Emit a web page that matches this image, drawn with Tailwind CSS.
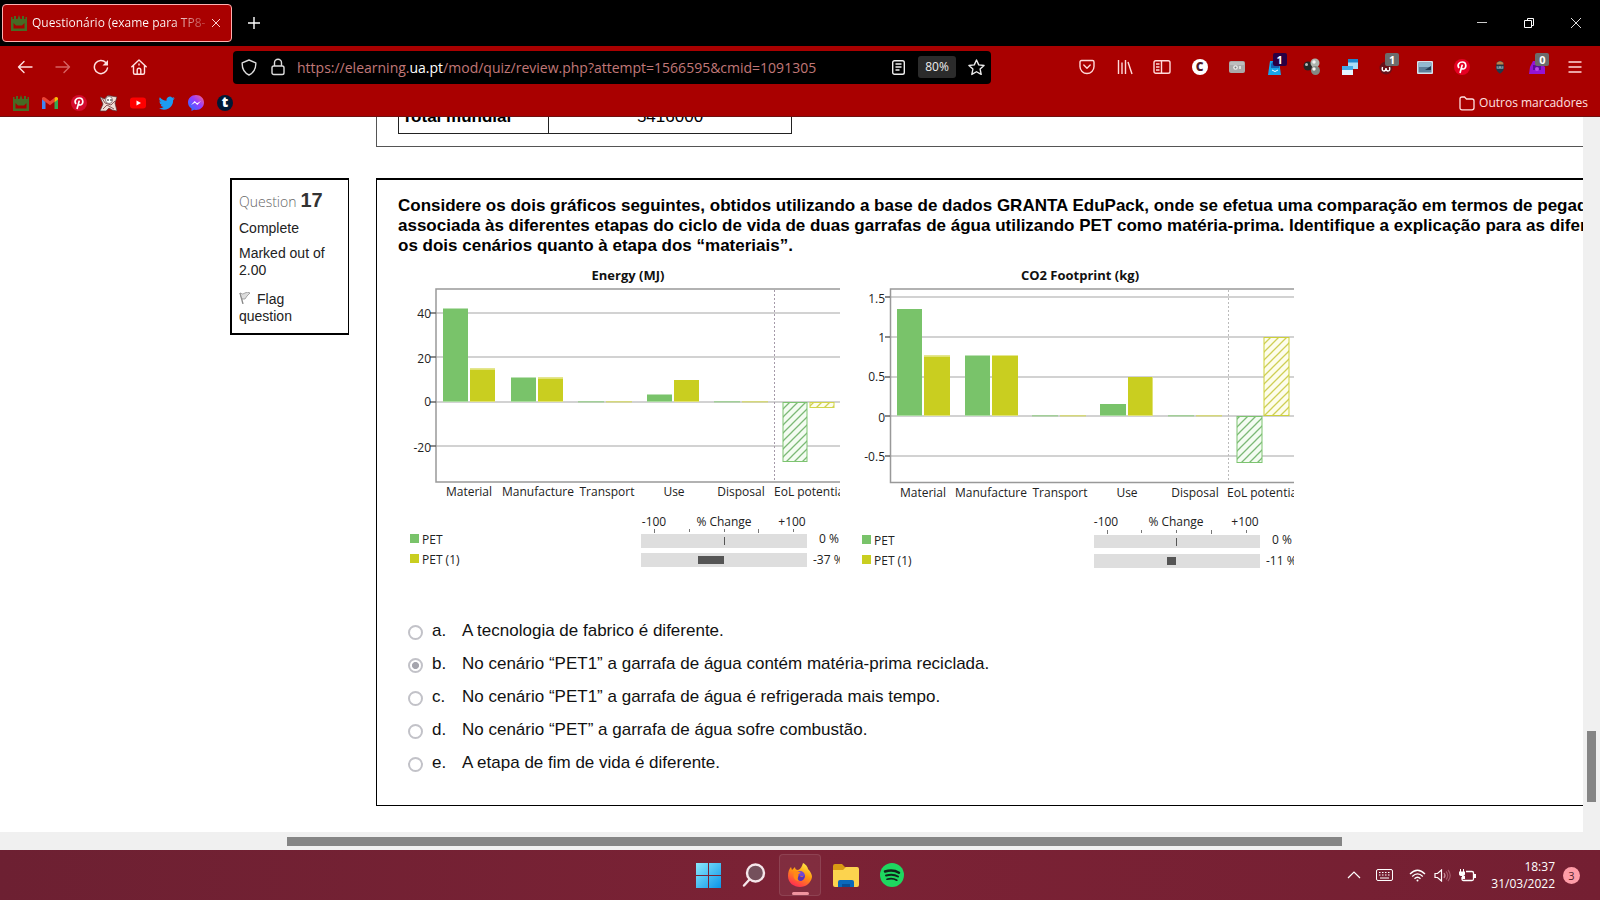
<!DOCTYPE html>
<html lang="pt">
<head>
<meta charset="utf-8">
<title>Questionário (exame para TP8-</title>
<script src="https://cdn.jsdelivr.net/npm/@tailwindcss/browser@4"></script>
</head>
<body class="flex h-screen flex-col overflow-hidden bg-white font-['Open_Sans','Noto_Sans',sans-serif] text-black">

<!-- Tab strip -->
<header class="flex h-[46px] shrink-0 items-center bg-black pr-px text-white">
  <div class="ml-0.5 flex h-[38px] w-[230px] items-center rounded-[4px] border border-[#ffb0b0] bg-[#a90000] pl-2 pr-1">
    <svg class="h-4 w-4 shrink-0" viewBox="0 0 16 16" fill="#476b24"><path d="M0 2h1.500v2H3V1h2v3h1.500L8 0l1.500 4H11V1h2v3h1.500V2H16v14H0zM2.500 8v5.500h11V8L11 10.500H5z" fill-rule="evenodd"/></svg>
    <span class="ml-[5px] w-[174px] overflow-hidden whitespace-nowrap bg-linear-to-r from-white from-80% to-white/20 bg-clip-text text-[12px] text-transparent">Questionário (exame para TP8-</span>
    <button class="flex h-5 w-5 items-center justify-center" aria-label="Fechar separador"><svg class="h-2 w-2" viewBox="0 0 8 8" stroke="#ffd0d0"><path d="M0 0l8 8M8 0L0 8"/></svg></button>
  </div>
  <button class="ml-2.5 flex h-6 w-6 items-center justify-center" aria-label="Novo separador"><svg class="h-3 w-3" viewBox="0 0 12 12" stroke="#fff" stroke-width="1.4"><path d="M6 0v12M0 6h12"/></svg></button>
  <div class="ml-auto flex text-white">
    <button class="flex h-8 w-[47px] items-center justify-center" aria-label="Minimizar"><svg class="h-3 w-3" viewBox="0 0 12 12" stroke="#ccc"><path d="M1 5.500h10"/></svg></button>
    <button class="flex h-8 w-[47px] items-center justify-center" aria-label="Restaurar"><svg class="h-3 w-3" viewBox="0 0 12 12" fill="none" stroke="#fff"><path d="M1.500 3.500h7v7h-7zM4.500 3.500v-2h6v7h-2"/></svg></button>
    <button class="flex h-8 w-[47px] items-center justify-center" aria-label="Fechar"><svg class="h-3 w-3" viewBox="0 0 12 12" stroke="#ddd"><path d="M1 1l10 10M11 1L1 11"/></svg></button>
  </div>
</header>

<!-- Navigation bar -->
<nav class="flex h-11 shrink-0 items-center bg-[#a90000] pb-0.5 pl-[13px] pr-[13px]">
  <div class="flex w-[220px] gap-3.5">
    <button class="flex h-6 w-6 items-center justify-center" aria-label="Recuar"><svg class="h-4 w-4" viewBox="0 0 16 16" fill="none" stroke="#ffe0e0" stroke-width="1.400" stroke-linecap="round" stroke-linejoin="round"><path d="M15 8H1.500M7 2.500L1.500 8 7 13.500"/></svg></button>
    <button class="flex h-6 w-6 items-center justify-center" aria-label="Avançar"><svg class="h-4 w-4" viewBox="0 0 16 16" fill="none" stroke="#d66262" stroke-width="1.400" stroke-linecap="round" stroke-linejoin="round"><path d="M1 8h13.500M9 2.500L14.500 8 9 13.500"/></svg></button>
    <button class="flex h-6 w-6 items-center justify-center" aria-label="Recarregar"><svg class="h-4 w-4" viewBox="0 0 16 16" fill="none" stroke="#ffe0e0" stroke-width="1.500" stroke-linecap="round"><path d="M14.500 9A6.600 6.600 0 1 1 12.800 3.500"/><path d="M15 1v5.500H9.500z" fill="#ffe0e0" stroke="none"/></svg></button>
    <button class="flex h-6 w-6 items-center justify-center" aria-label="Página inicial"><svg class="h-4 w-4" viewBox="0 0 16 16" fill="none" stroke="#ffe0e0" stroke-width="1.400" stroke-linejoin="round" stroke-linecap="round"><path d="M.8 7.800L8 .9l7.200 6.900M2.500 6.500v7.200q0 1.500 1.500 1.500h8q1.500 0 1.500-1.500V6.500M6.200 15v-4q0-1.800 1.800-1.800T9.800 11v4M8 5v1"/></svg></button>
  </div>
  <div class="flex h-[33px] w-[758px] items-center rounded-[4px] bg-black pl-2 pr-[3px]">
    <svg class="h-[17px] w-4 shrink-0" viewBox="0 0 16 17" fill="none" stroke="#ddd" stroke-width="1.400" stroke-linejoin="round"><path d="M8 1l6.800 2.800c.3 6-2 10-6.800 12.200C3.200 13.800.9 9.800 1.200 3.800z"/></svg>
    <svg class="ml-3.5 h-[18px] w-3.5 shrink-0" viewBox="0 0 14 18" fill="none" stroke="#ddd" stroke-width="1.400"><rect x="1" y="8" width="12" height="8.500" rx="1.800"/><path d="M3.500 8V4.800a3.500 3.500 0 0 1 7 0V8"/></svg>
    <div class="relative ml-3 flex-1">
      <input type="text" aria-label="Endereço" value="https://elearning.ua.pt/mod/quiz/review.php?attempt=1566595&amp;cmid=1091305" class="absolute inset-0 w-full bg-transparent text-[14px] text-transparent outline-none">
      <div class="pointer-events-none text-[14px] text-[#c07878]" aria-hidden="true">https://elearning.<span class="text-white">ua.pt</span>/mod/quiz/review.php?attempt=1566595&amp;cmid=1091305</div>
    </div>
    <button class="flex h-6 w-6 items-center justify-center" aria-label="Modo de leitura"><svg class="h-[15px] w-[13px]" viewBox="0 0 13 15" fill="none" stroke="#eee" stroke-width="1.400"><rect x=".7" y=".7" width="11.600" height="13.600" rx="1.800"/><path d="M3.500 4h6M3.500 7h6M3.500 10h4"/></svg></button>
    <button class="ml-2 h-[22px] w-[38px] rounded-[3px] bg-[#2b2b2b] text-[12px] leading-[22px] text-[#eee]">80%</button>
    <button class="ml-2 flex h-6 w-6 items-center justify-center" aria-label="Adicionar marcador"><svg class="h-[17px] w-[17px]" viewBox="0 0 16 16" fill="none" stroke="#eee" stroke-width="1.300" stroke-linejoin="round"><path d="M8 .9l2.100 4.600 5 .6-3.700 3.400 1 5L8 12l-4.400 2.500 1-5L.9 6.100l5-.6z"/></svg></button>
  </div>
  <div class="ml-auto flex w-[512px] justify-between">
    <button class="flex h-6 w-6 items-center justify-center" aria-label="Pocket"><svg class="h-4 w-4" viewBox="0 0 16 16" fill="none" stroke="#ffdada" stroke-width="1.400" stroke-linecap="round" stroke-linejoin="round"><path d="M2.500 1.500h11q1.500 0 1.500 1.500v4.500a7 7 0 0 1-14 0V3q0-1.500 1.500-1.500zM4.800 6L8 9.200 11.200 6"/></svg></button>
    <button class="flex h-6 w-6 items-center justify-center" aria-label="Biblioteca"><svg class="h-4 w-4" viewBox="0 0 16 16" fill="none" stroke="#ffdada" stroke-width="1.400"><path d="M1.500 1v14M5 3.500V15M8.500 1v14M11 3l4 12"/></svg></button>
    <button class="flex h-6 w-6 items-center justify-center" aria-label="Barra lateral"><svg class="h-4 w-[18px]" viewBox="0 0 18 16" fill="none" stroke="#ffdada" stroke-width="1.400"><rect x="1" y="1.800" width="16" height="12.400" rx="1.800"/><path d="M8.500 2v12M3 5h3.500M3 8h3.500M3 11h3.500"/></svg></button>
    <button class="flex h-6 w-6 items-center justify-center" aria-label="Extensão C"><span class="flex h-4 w-4 items-center justify-center rounded-full bg-white text-[12px] font-extrabold leading-none text-[#501828]">C</span></button>
    <button class="flex h-6 w-6 items-center justify-center" aria-label="Extensão de captura"><svg class="h-3 w-4" viewBox="0 0 16 12"><rect width="16" height="12" rx="2" fill="#aaa"/><rect x="1" y="1" width="14" height="3" fill="#bdbdbd"/><circle cx="6.500" cy="6.500" r="2.300" fill="#eee"/><circle cx="6.500" cy="6.500" r="1" fill="#777"/><path d="M10 5h2v3h-2z" fill="#ddd"/></svg></button>
    <button class="relative flex h-6 w-6 items-center justify-center" aria-label="Extensão, 1 aviso"><svg class="h-4 w-4" viewBox="0 0 16 16"><path d="M3 2h9l2 14H1z" fill="#18a5ea"/><path d="M4 5l3-4 5 3v5H4z" fill="#1660b4"/><path d="M5 11q3 3 6 0" stroke="#fff" fill="none"/></svg><span class="absolute -top-0.5 left-2.5 h-[13px] w-3.5 rounded-[2px] bg-[#290044] text-[11px] font-bold leading-[13px] text-white">1</span></button>
    <button class="flex h-6 w-6 items-center justify-center" aria-label="Extensão esferas"><svg class="h-[18px] w-[18px]" viewBox="0 0 18 18"><circle cx="5" cy="8" r="4.500" fill="#252525"/><circle cx="12" cy="5" r="4.500" fill="#aeb4ae"/><circle cx="12.500" cy="12.500" r="4.500" fill="#838983"/><circle cx="3.500" cy="6.500" r="1.500" fill="#bbb"/><circle cx="11" cy="4" r="1.700" fill="#f5f5f5"/><circle cx="11" cy="11" r="1.700" fill="#f5f5f5"/></svg></button>
    <button class="flex h-6 w-6 items-center justify-center" aria-label="Extensão janelas"><svg class="h-4 w-4" viewBox="0 0 16 16"><path d="M6 0h10v10H6z" fill="#a9dcf8"/><path d="M6 0h10v3.500H6z" fill="#1f86cf"/><path d="M0 7h11v9H0z" fill="#e4f5ff"/><path d="M0 7h11v4H0z" fill="#45a9e6"/></svg></button>
    <button class="relative flex h-6 w-6 items-center justify-center" aria-label="Extensão, 1 aviso"><svg class="h-4 w-4" viewBox="0 0 16 16"><circle cx="7" cy="9" r="6.500" fill="#671018"/><path d="M3.500 8q-1 4 1.500 4 2 0 2-3 0 3 2 3 2.500 0 1.500-4" fill="none" stroke="#fff" stroke-width="1.400"/></svg><span class="absolute -top-0.5 left-2.5 h-[13px] w-3.5 rounded-[2px] bg-[#6c6c6c] text-[11px] font-bold leading-[13px] text-white">1</span></button>
    <button class="flex h-6 w-6 items-center justify-center" aria-label="Extensão imagem"><svg class="h-[13px] w-4" viewBox="0 0 16 13"><rect width="16" height="13" rx="1" fill="#d5e2ec"/><rect x="1.500" y="1.500" width="13" height="10" fill="#5d7f9a"/><path d="M2 2h12v4H2z" fill="#92b9d0"/><path d="M8 9l6-4v4z" fill="#263b52"/></svg></button>
    <button class="flex h-6 w-6 items-center justify-center" aria-label="Pinterest"><svg class="h-4 w-4" viewBox="0 0 16 16"><circle cx="8" cy="8" r="8" fill="#e60023"/><path d="M6 14L8.300 5.600M5 9C2.600 5.500 5.500 3 8.300 3c4.700 0 4.300 7 1 7-1.500 0-2-1-2-1" fill="none" stroke="#fff" stroke-width="1.700"/></svg></button>
    <button class="flex h-6 w-6 items-center justify-center" aria-label="Extensão ninja"><svg class="h-3.5 w-2.5" viewBox="0 0 12 16"><path d="M2 3q4-5 8 0l1 6q-1 5-5 7-4-2-5-7z" fill="#223848"/><path d="M2 3q4-4 8 0v2H2z" fill="#bd814b"/><path d="M2 7h8v3H2z" fill="#93a7b2"/><path d="M3 8h2M7 8h2" stroke="#102030"/></svg></button>
    <button class="relative flex h-6 w-6 items-center justify-center" aria-label="Extensão, 0 avisos"><svg class="h-4 w-4" viewBox="0 0 16 16"><path d="M1 8l3-6h6l6 6v7H0z" fill="#9413d5"/><path d="M4 6h8v5H4z" fill="#5d0a99"/><circle cx="8" cy="10" r="2" fill="#bb46ed"/></svg><span class="absolute -top-0.5 left-2.5 h-[13px] w-3.5 rounded-[2px] bg-[#6c6c6c] text-[11px] font-bold leading-[13px] text-white">0</span></button>
    <button class="flex h-6 w-6 items-center justify-center" aria-label="Menu"><svg class="h-3 w-3.5" viewBox="0 0 14 12" stroke="#ffdada" stroke-width="1.400"><path d="M.5 1h13M.5 6h13M.5 11h13"/></svg></button>
  </div>
</nav>

<!-- Bookmarks -->
<div class="flex h-[27px] shrink-0 items-center justify-between border-b border-[#701010] bg-[#a90000] pl-[13px] pr-3">
  <div class="flex gap-[13px]">
    <a href="#" aria-label="Universidade"><svg class="h-4 w-4" viewBox="0 0 16 16" fill="#476b24"><path d="M0 2h1.500v2H3V1h2v3h1.500L8 0l1.500 4H11V1h2v3h1.500V2H16v14H0zM2.500 8v5.500h11V8L11 10.500H5z" fill-rule="evenodd"/></svg></a>
    <a href="#" aria-label="Gmail"><svg class="h-4 w-4" viewBox="0 0 16 16"><path d="M0 3v11h3.500V7z" fill="#4285f4"/><path d="M16 3v11h-3.500V7z" fill="#34a853"/><path d="M0 3q1.500-2 3.500-.3L8 6.200l4.500-3.500v4L8 10.300 0 4.500z" fill="#ea4335"/><path d="M12.500 2.700Q14.500 1 16 3v1.500l-3.500 2.800z" fill="#fbbc04"/></svg></a>
    <a href="#" aria-label="Pinterest"><svg class="h-4 w-4" viewBox="0 0 16 16"><circle cx="8" cy="8" r="8" fill="#d50b2d"/><path d="M6 14L8.300 5.600M5 9C2.600 5.500 5.500 3 8.300 3c4.700 0 4.300 7 1 7-1.500 0-2-1-2-1" fill="none" stroke="#fff" stroke-width="1.700"/></svg></a>
    <a href="#" aria-label="Mascote"><svg class="h-[17px] w-[17px]" viewBox="0 0 17 17"><path d="M0 2l5 2q2-5 6-3l6 1-2 6 2 8-5-1-3-2-3 3H0l3-7z" fill="#f1dcd5" stroke="#51333a" stroke-width=".7"/><circle cx="9" cy="5" r="3.500" fill="#fff" stroke="#64484a" stroke-width=".7"/><path d="M2 3l3 5 6 2 4-4M3 14l4-4 7 4" fill="none" stroke="#8b5a5d"/><circle cx="8" cy="5" r=".8"/><circle cx="11" cy="5" r=".8"/></svg></a>
    <a href="#" aria-label="YouTube"><svg class="h-4 w-4" viewBox="0 0 16 16"><rect y="2.500" width="16" height="11" rx="3" fill="#f00"/><path d="M6.500 5.500v5L11 8z" fill="#fff"/></svg></a>
    <a href="#" aria-label="Twitter"><svg class="h-4 w-4" viewBox="0 0 24 24" fill="#1d9bf0"><path d="M23.600 4.900a9.700 9.700 0 0 1-2.800.8 4.900 4.900 0 0 0 2.100-2.700 9.700 9.700 0 0 1-3.100 1.200 4.900 4.900 0 0 0-8.400 4.500A13.900 13.900 0 0 1 1.300 3.500a4.900 4.900 0 0 0 1.500 6.600 4.900 4.900 0 0 1-2.200-.6 4.900 4.900 0 0 0 3.900 4.900 4.900 4.900 0 0 1-2.200.1 4.900 4.900 0 0 0 4.600 3.400A9.900 9.900 0 0 1 0 19.900a13.900 13.900 0 0 0 21.200-12.400 10 10 0 0 0 2.400-2.600z"/></svg></a>
    <a href="#" aria-label="Messenger"><svg class="h-4 w-4" viewBox="0 0 16 16"><defs><linearGradient id="msg" x1="0" y1="1" x2="1" y2="0"><stop stop-color="#147bff"/><stop offset=".55" stop-color="#963cff"/><stop offset="1" stop-color="#ff6685"/></linearGradient></defs><path d="M8 0c4.600 0 8 3.300 8 7.500S12.600 15 8 15l-2-.2L3.500 16v-2.500C1.300 12.200 0 10 0 7.500 0 3.300 3.400 0 8 0z" fill="url(#msg)"/><path d="M3 10l3.700-4L9 8.200 13 6 9.300 10 7 7.800z" fill="#fff"/></svg></a>
    <a href="#" aria-label="Tumblr"><span class="flex h-4 w-4 items-center justify-center rounded-full bg-[#001935] pb-0.5 text-[14px] font-extrabold leading-none text-white">t</span></a>
  </div>
  <button class="flex items-center gap-1 text-[12px] text-[#ffe0e0]"><svg class="h-[15px] w-4" viewBox="0 0 16 15" fill="none" stroke="#ffe0e0" stroke-width="1.300"><path d="M1 11.800V3q0-2 2-2h2.500l2 2H13q2 0 2 2v6.800q0 2-2 2H3q-2 0-2-2z"/></svg>Outros marcadores</button>
</div>

<!-- Page viewport -->
<div class="flex min-h-0 flex-1 bg-[#f0f0f0]">
  <div class="flex min-w-0 flex-1 flex-col">
    <main class="min-h-0 flex-1 overflow-hidden bg-white font-['Liberation_Sans',Arial,sans-serif]">
      <section class="ml-[376px] h-[30px] overflow-hidden border-b border-l border-[#555] pl-[21px]">
        <div class="flex h-[17px] items-end overflow-hidden">
          <table class="w-[394px] shrink-0 table-fixed border-collapse text-[17px] leading-5 text-black">
            <tbody><tr><th class="w-[150px] border border-[#222] pb-1.5 pl-[3px] text-left">Total mundial</th><td class="border border-[#222] pb-1.5 text-center">5416000</td></tr></tbody>
          </table>
        </div>
      </section>

      <div class="mt-[31px] flex items-start">
        <aside class="ml-[230px] w-[119px] shrink-0 border-2 border-r border-black pb-2 pl-[7px] pr-4 pt-2 text-[14px] leading-[17px] text-[#222]">
          <h3 class="flex items-baseline gap-1 leading-6 text-[#666]"><span class="font-['Open_Sans',sans-serif] text-[14px] font-light">Question</span><span class="text-[20px] font-bold text-[#333]">17</span></h3>
          <p class="mt-1.5">Complete</p>
          <p class="mt-2 whitespace-nowrap">Marked out of<br>2.00</p>
          <a href="#" class="mt-3 block"><svg class="mr-1.5 inline h-3 w-3 align-baseline" viewBox="0 0 12 12"><path d="M1 1l3 11" stroke="#888" stroke-width="1.300"/><path d="M1 1q3 2 5 0t5 0L8 4 6 7 3 7z" fill="#ddd" stroke="#888" stroke-width=".7"/></svg>Flag question</a>
        </aside>

        <section class="ml-[27px] min-w-0 flex-1 overflow-hidden border-b border-l border-t-2 border-black pb-[26px] pl-[21px] pt-4">
          <p class="whitespace-nowrap text-[17px] font-bold leading-[20px]">Considere os dois gráficos seguintes, obtidos utilizando a base de dados GRANTA EduPack, onde se efetua uma comparação em termos de pegada<br>associada às diferentes etapas do ciclo de vida de duas garrafas de água utilizando PET como matéria-prima. Identifique a explicação para as diferenças entre<br>os dois cenários quanto à etapa dos “materiais”.</p>

          <div class="mt-[5px] flex gap-2.5">
            <svg class="h-[320px] w-[442px] shrink-0 font-['Open_Sans',sans-serif]" viewBox="398 261 442 320" font-size="12" fill="#222" role="img" aria-label="Energy (MJ)">
              <defs>
                <pattern id="hg" width="8" height="8" patternUnits="userSpaceOnUse"><rect width="8" height="8" fill="#f4fcf2"/><path d="M-1 9L9-1M-1 1l2-2M7 9l2-2" stroke="#7cb976" stroke-width="1.300"/></pattern>
                <pattern id="hy" width="8" height="8" patternUnits="userSpaceOnUse"><rect width="8" height="8" fill="#fdfdec"/><path d="M-1 9L9-1M-1 1l2-2M7 9l2-2" stroke="#cfcf55" stroke-width="1.300"/></pattern>
              </defs>
              <text x="628" y="280" text-anchor="middle" font-weight="700" font-size="13" fill="#111">Energy (MJ)</text>
              <path d="M430 313h410M430 357h410M430 402h410M430 446h410" stroke="#c4c4c4" stroke-width="1.500"/>
              <path d="M840 289H436v193h404" fill="none" stroke="#999" stroke-width="1.500"/>
              <path d="M430 313h6M430 357h6M430 402h6M430 446h6" stroke="#444"/>
              <path d="M774.500 290v191" stroke="#a59aa9" stroke-dasharray="2 2"/>
              <g fill="#79c36a"><path d="M443 308.500h25V402h-25zM511 377.500h25V402h-25zM647 394.500h25V402h-25z"/></g>
              <path d="M578 401h26v1.500h-26zM714 401h26v1.500h-26z" fill="#a3cf99"/>
              <g fill="#c9ce20"><path d="M470 368.500h25V402h-25zM538 377.500h25V402h-25zM674 380h25v22h-25z"/></g>
              <path d="M606 401h26v1.500h-26zM742 401h26v1.500h-26z" fill="#d5d87c"/>
              <path d="M443 401.500h25M511 401.500h25M647 401.500h25" stroke="#a9dc9e"/><path d="M470 401.500h25M538 401.500h25M674 401.500h25M470 369.500h25M538 378.500h25" stroke="#e0e275"/>
              <rect x="783" y="402.500" width="24" height="59" fill="url(#hg)" stroke="#7dc470"/>
              <rect x="810" y="402.500" width="24" height="5" fill="url(#hy)" stroke="#d2d54a"/>
              <g text-anchor="end"><text x="431" y="318">40</text><text x="431" y="363">20</text><text x="431" y="406">0</text><text x="431" y="452">-20</text></g>
              <g text-anchor="middle"><text x="469" y="496">Material</text><text x="538" y="496">Manufacture</text><text x="607" y="496">Transport</text><text x="674" y="496">Use</text><text x="741" y="496">Disposal</text></g><text x="774" y="496">EoL potential</text>
              <g text-anchor="middle"><text x="654" y="526">-100</text><text x="724" y="526">% Change</text><text x="792" y="526">+100</text></g>
              <path d="M654.500 529v4M689.500 529v3M724.500 529v3M758.500 529v4M793.500 529v3" stroke="#777"/>
              <path d="M641 534h166v14H641zM641 553h166v14H641z" fill="#dedede"/>
              <path d="M724.500 537v8" stroke="#555"/><path d="M698 556h26v8h-26z" fill="#555"/>
              <path d="M410 534h9v9h-9z" fill="#79c36a"/><path d="M410 554h9v9h-9z" fill="#c9ce20"/>
              <text x="422" y="544">PET</text><text x="422" y="564">PET (1)</text><text x="819" y="543">0 %</text><text x="813" y="564">-37 %</text>
            </svg>
            <svg class="h-[320px] w-[444px] shrink-0 font-['Open_Sans',sans-serif]" viewBox="850 261 444 320" font-size="12" fill="#222" role="img" aria-label="CO2 Footprint (kg)">
              <text x="1080" y="280" text-anchor="middle" font-weight="700" font-size="13" fill="#111">CO2 Footprint (kg)</text>
              <path d="M885 297h409M885 337h409M885 377h409M885 416h409M885 456h409" stroke="#c4c4c4" stroke-width="1.500"/>
              <path d="M1294 289H890.500v193.500H1294" fill="none" stroke="#999" stroke-width="1.500"/>
              <path d="M885 297h5M885 337h5M885 377h5M885 416h5M885 456h5" stroke="#444"/>
              <path d="M1228.500 290v192" stroke="#bbb" stroke-dasharray="2 2"/>
              <g fill="#79c36a"><path d="M897 309h25v107h-25zM965 355.500h25V416h-25zM1100 404h26v12h-26z"/></g>
              <path d="M1032 415h26v1.500h-26zM1168 415h26v1.500h-26z" fill="#a3cf99"/>
              <g fill="#c9ce20"><path d="M924 355.500h26V416h-26zM992 355.500h26V416h-26zM1128 377h25v39h-25z"/></g>
              <path d="M1060 415h26v1.500h-26zM1196 415h26v1.500h-26z" fill="#d5d87c"/>
              <path d="M897 415.500h25M965 415.500h25M1100 415.500h26" stroke="#a9dc9e"/><path d="M924 415.500h26M992 415.500h26M1128 415.500h25M924 356.500h26M1152.500 377v39" stroke="#e0e275"/>
              <rect x="1237" y="416.500" width="25" height="46" fill="url(#hg)" stroke="#7dc470"/>
              <rect x="1264" y="337.500" width="25" height="78" fill="url(#hy)" stroke="#cdd13a"/>
              <g text-anchor="end"><text x="885" y="303">1.5</text><text x="885" y="342">1</text><text x="885" y="381">0.5</text><text x="885" y="422">0</text><text x="885" y="461">-0.5</text></g>
              <g text-anchor="middle"><text x="923" y="497">Material</text><text x="991" y="497">Manufacture</text><text x="1060" y="497">Transport</text><text x="1127" y="497">Use</text><text x="1195" y="497">Disposal</text></g><text x="1227" y="497">EoL potential</text>
              <g text-anchor="middle"><text x="1106" y="526">-100</text><text x="1176" y="526">% Change</text><text x="1245" y="526">+100</text></g>
              <path d="M1107.500 530v4M1141.500 530v3M1176.500 530v3M1211.500 530v4M1246.500 530v3" stroke="#777"/>
              <path d="M1094 535h166v13h-166zM1094 554h166v14h-166z" fill="#dedede"/>
              <path d="M1176.500 538v8" stroke="#555"/><path d="M1167 557h9v8h-9z" fill="#555"/>
              <path d="M862 535h9v9h-9z" fill="#79c36a"/><path d="M862 555h9v9h-9z" fill="#c9ce20"/>
              <text x="874" y="545">PET</text><text x="874" y="565">PET (1)</text><text x="1272" y="544">0 %</text><text x="1266" y="565">-11 %</text>
            </svg>
          </div>

          <div role="radiogroup" aria-label="Resposta" class="mt-[33px] pl-[10px] text-[17px] leading-[33px] text-[#111]">
            <div class="flex items-center"><input class="mt-1 h-[15px] w-[15px] appearance-none rounded-full border-2 border-[#c2c2c8] bg-white" type="radio" name="q17" id="a"><label class="flex gap-4 pl-[9px]" for="a"><span class="w-3.5">a.</span><span>A tecnologia de fabrico é diferente.</span></label></div>
            <div class="flex items-center"><input class="mt-1 h-[15px] w-[15px] appearance-none rounded-full border-2 border-[#c2c2c8] bg-white bg-radial from-[#a5a5ad] from-40% to-white to-50%" type="radio" name="q17" id="b" checked><label class="flex gap-4 pl-[9px]" for="b"><span class="w-3.5">b.</span><span>No cenário “PET1” a garrafa de água contém matéria-prima reciclada.</span></label></div>
            <div class="flex items-center"><input class="mt-1 h-[15px] w-[15px] appearance-none rounded-full border-2 border-[#c2c2c8] bg-white" type="radio" name="q17" id="c"><label class="flex gap-4 pl-[9px]" for="c"><span class="w-3.5">c.</span><span>No cenário “PET1” a garrafa de água é refrigerada mais tempo.</span></label></div>
            <div class="flex items-center"><input class="mt-1 h-[15px] w-[15px] appearance-none rounded-full border-2 border-[#c2c2c8] bg-white" type="radio" name="q17" id="d"><label class="flex gap-4 pl-[9px]" for="d"><span class="w-3.5">d.</span><span>No cenário “PET” a garrafa de água sofre combustão.</span></label></div>
            <div class="flex items-center"><input class="mt-1 h-[15px] w-[15px] appearance-none rounded-full border-2 border-[#c2c2c8] bg-white" type="radio" name="q17" id="e"><label class="flex gap-4 pl-[9px]" for="e"><span class="w-3.5">e.</span><span>A etapa de fim de vida é diferente.</span></label></div>
          </div>
        </section>
      </div>
    </main>
    <div class="flex h-[18px] shrink-0 items-center"><div class="ml-[287px] h-[9px] w-[1055px] bg-[#858585]"></div></div>
  </div>
  <div class="flex w-[17px] shrink-0 flex-col items-center"><div class="mt-[614px] h-[71px] w-[9px] bg-[#858585]"></div></div>
</div>

<!-- Taskbar -->
<footer class="grid h-[50px] shrink-0 grid-cols-[1fr_auto_1fr] items-center bg-linear-to-r from-[#6d2032] via-[#7b2235] to-[#741f32] text-white">
  <div></div>
  <div class="flex gap-1">
    <button class="flex h-[42px] w-[42px] items-center justify-center" aria-label="Iniciar"><svg class="h-[25px] w-[25px]" viewBox="0 0 25 25"><defs><linearGradient id="win" x1="0" y1="0" x2="1" y2="1"><stop stop-color="#8be8fc"/><stop offset="1" stop-color="#0a94e8"/></linearGradient></defs><path d="M0 0h12v12H0zM13 0h12v12H13zM0 13h12v12H0zM13 13h12v12H13z" fill="url(#win)"/></svg></button>
    <button class="flex h-[42px] w-[42px] items-center justify-center" aria-label="Procurar"><svg class="h-6 w-6" viewBox="0 0 24 24" fill="#74505c" stroke="#f5e6ea" stroke-width="2.400" stroke-linecap="round"><circle cx="13.500" cy="10" r="8.500"/><path d="M7.500 16.500L2 22.500"/></svg></button>
    <button class="relative flex h-[42px] w-[42px] items-center justify-center rounded-[4px] border border-white/10 bg-white/5" aria-label="Firefox"><svg class="h-6 w-6" viewBox="0 0 24 24"><defs><linearGradient id="ff" x1=".8" y1="0" x2=".3" y2="1"><stop stop-color="#fff04a"/><stop offset=".45" stop-color="#ff980e"/><stop offset="1" stop-color="#ff2855"/></linearGradient></defs><path d="M15 0c4 2 5 5 5 6 3 3 4 6 4 8-1 6-6 10-12 10S0 20 0 13c0-4 1-7 3-9l1 3 3-3c0 2 1 3 3 3 3-1 4-4 5-7z" fill="url(#ff)"/><circle cx="12" cy="13" r="5" fill="#7147d5"/><path d="M6 9q4-2 7 1-2 0-3 2 2 2 5 1-1 5-5 5-6-1-4-9z" fill="#ff8a16"/><path d="M11 12q3 4 6 0-1 6-5 6-4-1-1-6z" fill="#5b31b5"/></svg><span class="absolute bottom-0 h-[3px] w-[17px] rounded-full bg-[#f0949f]"></span></button>
    <button class="flex h-[42px] w-[42px] items-center justify-center" aria-label="Explorador"><svg class="h-[23px] w-[26px]" viewBox="0 0 26 23"><path d="M0 2q0-2 2-2h7l3 3h11q2 0 2 2v5H0z" fill="#d99a13"/><path d="M0 6h10l3-3h11q2 0 2 2v16q0 2-2 2H2q-2 0-2-2z" fill="#fcd34e"/><path d="M5 23v-5q0-2 2-2h12q2 0 2 2v5z" fill="#0968bb"/><path d="M9 20h8v3H9z" fill="#084d94"/></svg></button>
    <button class="flex h-[42px] w-[42px] items-center justify-center" aria-label="Spotify"><svg class="h-6 w-6" viewBox="0 0 24 24" fill="none" stroke="#10231a" stroke-linecap="round"><circle cx="12" cy="12" r="12" fill="#1ed760" stroke="none"/><path d="M5 8.500q8-2.500 14 1.200" stroke-width="2.500"/><path d="M6 12.500q7-2 12 1" stroke-width="2"/><path d="M7 16.200q5.500-1.600 9.800 1" stroke-width="1.700"/></svg></button>
  </div>
  <div class="flex items-center justify-end pr-5">
    <button class="mr-3.5 flex w-4 justify-center" aria-label="Ícones ocultos"><svg class="h-2 w-3.5" viewBox="0 0 14 8" fill="none" stroke="#fff" stroke-width="1.200"><path d="M1 7l6-6 6 6"/></svg></button>
    <button class="mr-4" aria-label="Teclado"><svg class="h-3 w-[17px]" viewBox="0 0 17 12" fill="none" stroke="#fff"><rect x=".5" y=".5" width="16" height="11" rx="1.500"/><path d="M3 3.500h11M3 6h11" stroke-dasharray="1.500 1.500"/><path d="M4 9h9"/></svg></button>
    <button class="flex items-center gap-2" aria-label="Rede, volume e bateria">
      <svg class="h-[13px] w-[17px]" viewBox="0 0 17 13" fill="none" stroke="#fff" stroke-width="1.300"><path d="M1 5q7.500-7.500 15 0M3.200 7.500q5.300-5.300 10.600 0M5.500 9.800q3-3 6 0"/><circle cx="8.500" cy="11.500" r="1" fill="#fff" stroke="none"/></svg>
      <svg class="h-[13px] w-[17px]" viewBox="0 0 17 13" fill="none" stroke="#fff" stroke-width="1.200"><path d="M1 4.500h2.500L7.500 1v11L3.500 8.500H1z"/><path d="M10 4q2 2.500 0 5" stroke="#c98f9b"/><path d="M12 2.500q3.500 4 0 8M14 1q4.500 5.500 0 11" stroke="#a05767"/></svg>
      <svg class="h-[13px] w-[17px]" viewBox="0 0 17 13" fill="none" stroke="#fff" stroke-width="1.300"><path d="M7 2.500h6q1.500 0 1.500 1.500v6q0 1.500-1.500 1.500H4.500Q3 11.500 3 10V8"/><path d="M0 2.500h1V0h1v2.500h2V0h1v2.500h1V5q0 2-3 2T0 5zM3 7h3v3H3zM15 5h2v4h-2z" fill="#fff" stroke="none"/></svg>
    </button>
    <div class="ml-[15px] text-right text-[12px] leading-[17px]"><div>18:37</div><div>31/03/2022</div></div>
    <button class="ml-2 h-[17px] w-[17px] rounded-full bg-[#ff9da8] text-[11px] leading-[17px] text-[#50202a]" aria-label="3 notificações">3</button>
  </div>
</footer>
</body>
</html>
